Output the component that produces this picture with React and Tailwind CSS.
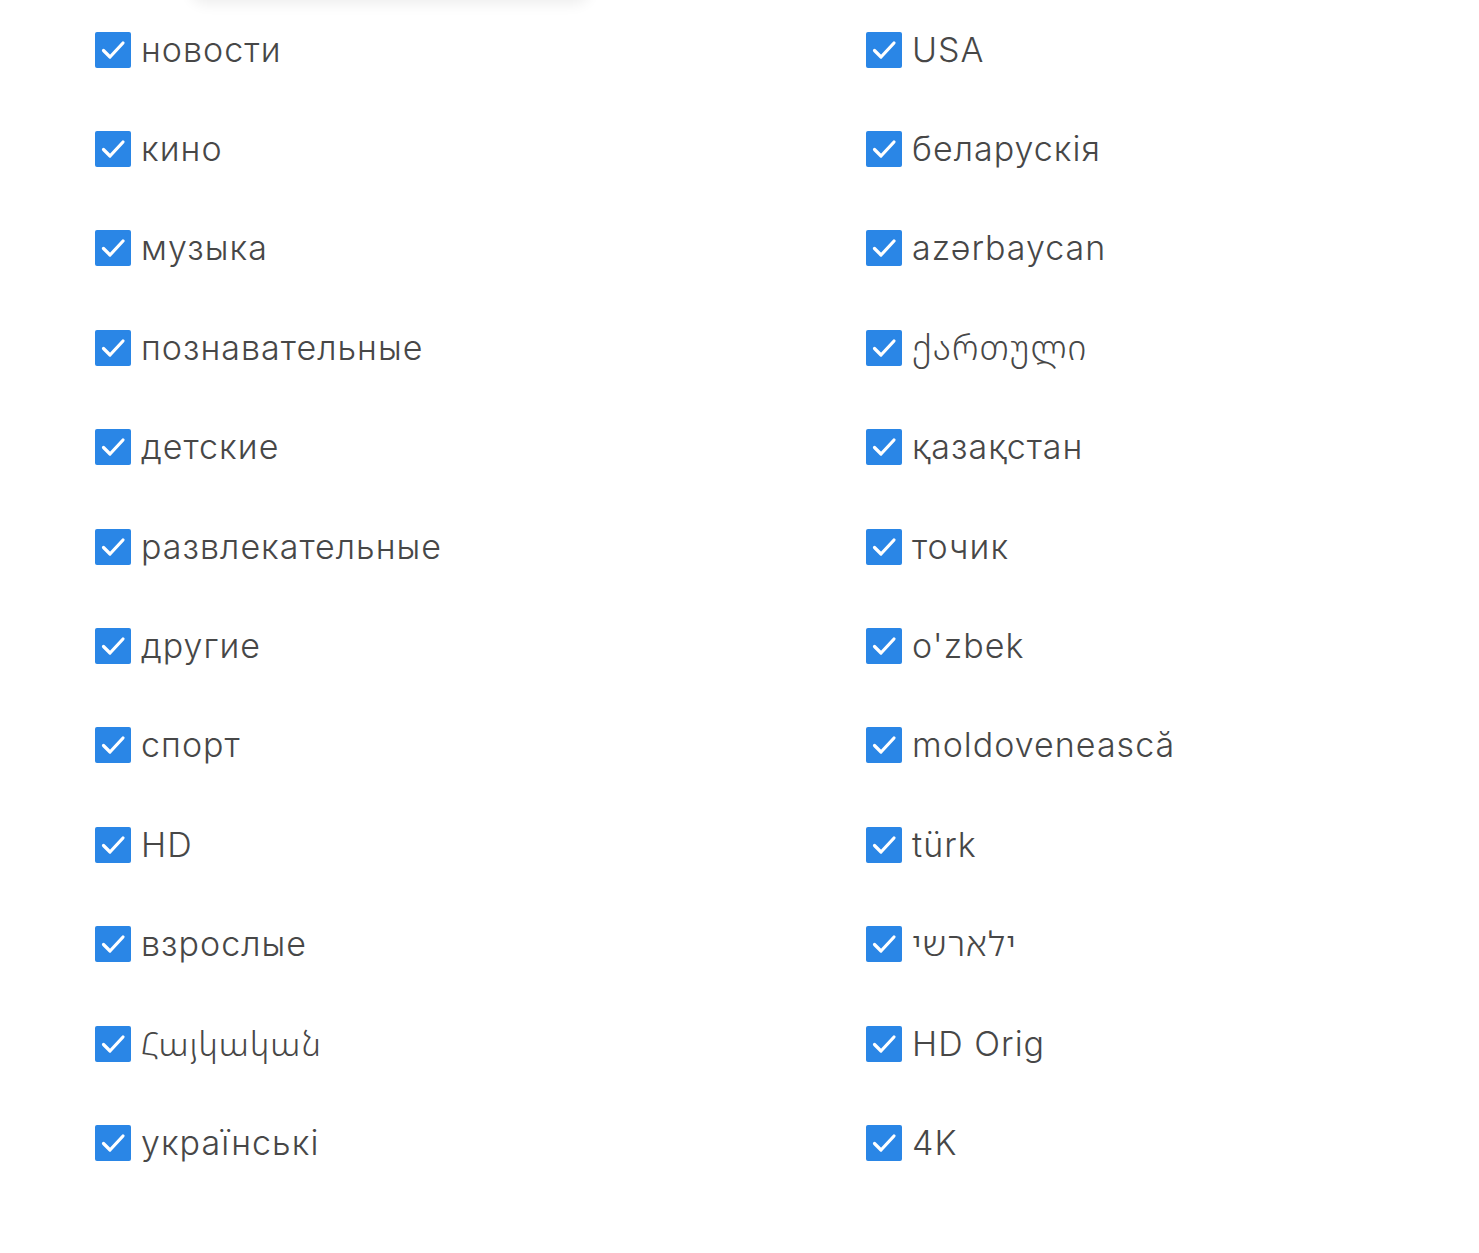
import { useState } from 'react';

const genres = [
  'новости',
  'кино',
  'музыка',
  'познавательные',
  'детские',
  'развлекательные',
  'другие',
  'спорт',
  'HD',
  'взрослые',
  'Հայկական',
  'українські',
];

const regions = [
  'USA',
  'беларускія',
  'azərbaycan',
  'ქართული',
  'қазақстан',
  'точик',
  "o'zbek",
  'moldovenească',
  'türk',
  'ישראלי',
  'HD Orig',
  '4K',
];

function Check({ label }) {
  const [on, setOn] = useState(true);
  return (
    <label className="flex h-[99.4px] cursor-pointer items-center gap-[10px]" onClick={() => setOn(!on)}>
      <span className={`flex h-[36px] w-[36px] shrink-0 items-center justify-center rounded-[2px] ${on ? 'bg-[#2a86e6]' : 'border-2 border-gray-400 bg-white'}`}>
        {on && (
          <svg viewBox="0 0 36 36" className="h-[36px] w-[36px]" fill="none" stroke="white" strokeWidth="3.2" strokeLinecap="round" strokeLinejoin="round">
            <polyline points="8.5,18.5 15,25 28,11" />
          </svg>
        )}
      </span>
      <bdo dir="ltr" className="text-[34px] font-light leading-none tracking-[0.03em] text-[#474747]">
        {label}
      </bdo>
    </label>
  );
}

export default function App() {
  return (
    <div className="min-h-screen overflow-hidden bg-white font-['Inter','Noto_Sans','Noto_Sans_Georgian','Noto_Sans_Armenian','Noto_Sans_Hebrew',sans-serif]">
      {/* тень от выпадающего блока сверху */}
      <div className="ml-[190px] -mt-[30px] h-[30px] w-[400px] rounded-b-2xl bg-white shadow-[0_4px_14px_rgba(0,0,0,0.07)]" />
      <div className="grid grid-cols-[771px_1fr] pl-[95px]">
        <div className="flex flex-col">
          {genres.map((g) => (
            <Check key={g} label={g} />
          ))}
        </div>
        <div className="flex flex-col">
          {regions.map((r) => (
            <Check key={r} label={r} />
          ))}
        </div>
      </div>
    </div>
  );
}
